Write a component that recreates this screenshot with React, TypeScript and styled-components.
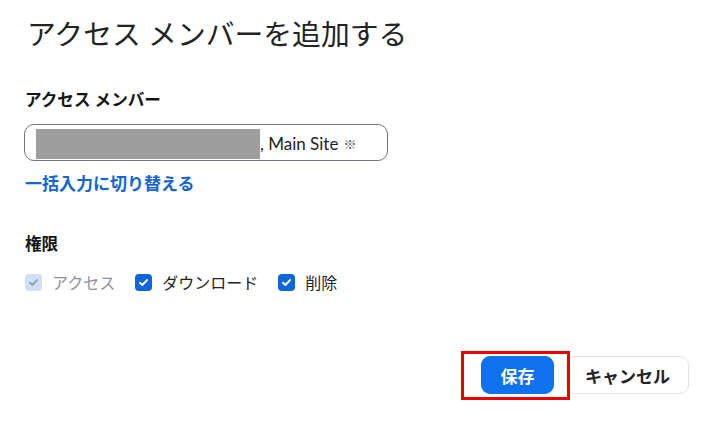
import React from 'react';
import styled, { createGlobalStyle } from 'styled-components';

const GlobalStyle = createGlobalStyle`
  body {
    margin: 0;
    background: #ffffff;
    font-family: Lato, 'Noto Sans CJK JP', sans-serif;
    color: #222325;
  }
`;

const Page = styled.div`
  width: 711px;
  height: 428px;
  box-sizing: border-box;
  padding: 14px 22px 0 24px;
  display: flex;
  flex-direction: column;
`;

const Title = styled.h1`
  margin: 0 0 34px 3px;
  font-size: 28.8px;
  line-height: 40px;
  font-weight: 400;
  color: #222325;
`;

const Label = styled.div`
  font-size: 16.6px;
  line-height: 24px;
  font-weight: 700;
  color: #131619;
  margin-left: 1px;
`;

const Input = styled.div`
  margin-top: 12px;
  width: 364px;
  height: 37px;
  box-sizing: border-box;
  border: 1px solid #6e7680;
  border-radius: 10px;
  padding: 2px 0 0 11px;
  display: flex;
  align-items: center;
  font-size: 17px;
  color: #222325;
`;

const Redacted = styled.span`
  width: 224px;
  height: 30px;
  background: #9e9e9e;
  flex-shrink: 0;
`;

const Mark = styled.span`
  margin-left: 5px;
  font-size: 13px;
  color: #555;
`;

const Link = styled.a`
  margin-top: 11px;
  margin-left: 1px;
  font-size: 17px;
  line-height: 24px;
  font-weight: 700;
  color: #1265d2;
  text-decoration: none;
  align-self: flex-start;
`;

const Section = styled(Label)`
  margin-top: 36px;
`;

const CheckRow = styled.div`
  margin-top: 14px;
  height: 24px;
  display: flex;
  align-items: center;
  gap: 20px;
  margin-left: 1px;
`;

const CheckItem = styled.label<{ disabled?: boolean }>`
  display: flex;
  align-items: center;
  gap: 10px;
  font-size: 16px;
  color: ${(p) => (p.disabled ? '#8d939b' : '#222325')};
`;

const Box = styled.span<{ disabled?: boolean }>`
  width: 17px;
  height: 17px;
  border-radius: 4px;
  background: ${(p) => (p.disabled ? '#cfe0f7' : '#0e66d8')};
  display: flex;
  align-items: center;
  justify-content: center;
`;

const Actions = styled.div`
  margin-top: 62px;
  display: flex;
  justify-content: flex-end;
  gap: 12px;
`;

const Marked = styled.div`
  position: relative;
  &::after {
    content: '';
    position: absolute;
    left: -20px;
    right: -16px;
    top: -5px;
    bottom: -6px;
    border: 3px solid #ee0000;
    pointer-events: none;
  }
`;

const Button = styled.button<{ primary?: boolean }>`
  height: 38px;
  padding: 0;
  width: ${(p) => (p.primary ? '73px' : '123px')};
  border-radius: 9px;
  border: 1px solid ${(p) => (p.primary ? '#0e72ed' : '#dfe3e8')};
  background: ${(p) => (p.primary ? '#0e72ed' : '#ffffff')};
  color: ${(p) => (p.primary ? '#ffffff' : '#222325')};
  font-family: Lato, 'Noto Sans CJK JP', sans-serif;
  font-size: 17px;
  font-weight: 700;
`;

const Check = ({ disabled }: { disabled?: boolean }) => (
  <Box disabled={disabled}>
    <svg width='11' height='11' viewBox='0 0 10 10'>
      <path d='M1.8 5.2 L4 7.3 L8.2 2.8' fill='none' stroke={disabled ? '#9aa3ad' : '#ffffff'} strokeWidth='1.8' strokeLinecap='round' strokeLinejoin='round' />
    </svg>
  </Box>
);

const App = () => {
  return (
    <>
      <GlobalStyle />
      <Page>
        <Title>アクセス メンバーを追加する</Title>
        <Label>アクセス メンバー</Label>
        <Input>
          <Redacted />
          , Main Site
          <Mark>※</Mark>
        </Input>
        <Link href='#'>一括入力に切り替える</Link>
        <Section>権限</Section>
        <CheckRow>
          <CheckItem disabled>
            <Check disabled />
            アクセス
          </CheckItem>
          <CheckItem>
            <Check />
            ダウンロード
          </CheckItem>
          <CheckItem>
            <Check />
            削除
          </CheckItem>
        </CheckRow>
        <Actions>
          <Marked>
            <Button primary>保存</Button>
          </Marked>
          <Button>キャンセル</Button>
        </Actions>
      </Page>
    </>
  );
};

export default App;
